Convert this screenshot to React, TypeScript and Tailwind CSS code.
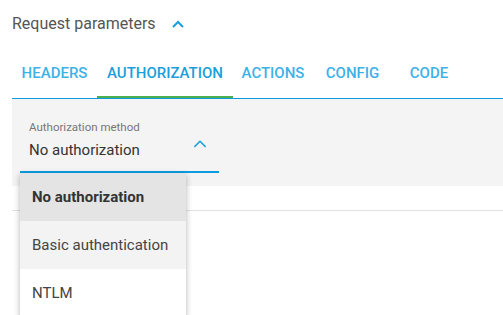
import React from "react";

function ChevronUp({ className, sw }: { className?: string; sw: number }) {
  return (
    <svg className={className} viewBox="0 0 12 8" fill="none" stroke="currentColor" strokeWidth={sw}>
      <path d="M1 7 L6 2 L11 7" />
    </svg>
  );
}

export default function App() {
  const tabs = [
    { label: "HEADERS", w: "w-[85px]" },
    { label: "AUTHORIZATION", w: "w-[136px]", active: true },
    { label: "ACTIONS", w: "w-[80px]" },
    { label: "CONFIG", w: "w-[79px]" },
    { label: "CODE", w: "w-[74px]" },
  ];
  return (
    <div
      className="relative w-[503px] h-[315px] bg-white overflow-hidden"
      style={{ fontFamily: "Roboto, 'Liberation Sans', sans-serif" }}
    >
      <div className="pl-3 pt-[14px]">
        <div className="h-5 flex items-center">
          <span className="text-[16px] leading-5 text-[#555]">Request parameters</span>
          <ChevronUp className="ml-[16px] w-[12px] h-[8px] text-[#1a9fdc]" sw={2} />
        </div>
      </div>
      <div className="ml-3 mt-[14px] flex h-[51px] border-b border-[#0b9de0]">
        {tabs.map((t) => (
          <div
            key={t.label}
            className={`${t.w} relative flex items-center justify-center text-[15px] font-medium ${
              t.active ? "text-[#1a9fdc]" : "text-[#3db2e8]"
            }`}
          >
            <span className="pt-[1px]">{t.label}</span>
            {t.active && <div className="absolute left-0 right-0 bottom-0 h-[2px] bg-[#4caf50]" />}
          </div>
        ))}
      </div>
      <div className="ml-3 h-[87px] bg-[#f4f4f4] pl-2 pt-[13px]">
        <div className="w-[199px] h-[61px] border-b-2 border-[#0b9de0] pl-[9px] relative">
          <div className="text-[11.5px] leading-[14px] text-[#777] pt-[8px]">Authorization method</div>
          <div className="text-[15px] leading-5 text-[#333] mt-[6px]">No authorization</div>
          <ChevronUp className="absolute left-[173px] top-[27px] w-[14px] h-[9px] text-[#1a9fdc]" sw={1.3} />
        </div>
      </div>
      <div className="ml-3 mt-[24px] border-t border-[#e2e2e2]" />
      <div className="absolute left-[20px] top-[173px] w-[166px] bg-white shadow-[0_2px_6px_rgba(0,0,0,0.3)]">
        <div className="h-[48px] flex items-center pl-3 bg-[#e4e4e4] text-[15px] font-bold text-[#333]">
          No authorization
        </div>
        <div className="h-[48px] flex items-center pl-3 bg-[#f3f3f3] text-[15px] text-[#444]">
          Basic authentication
        </div>
        <div className="h-[48px] flex items-center pl-3 bg-white text-[15px] text-[#444]">NTLM</div>
      </div>
    </div>
  );
}
